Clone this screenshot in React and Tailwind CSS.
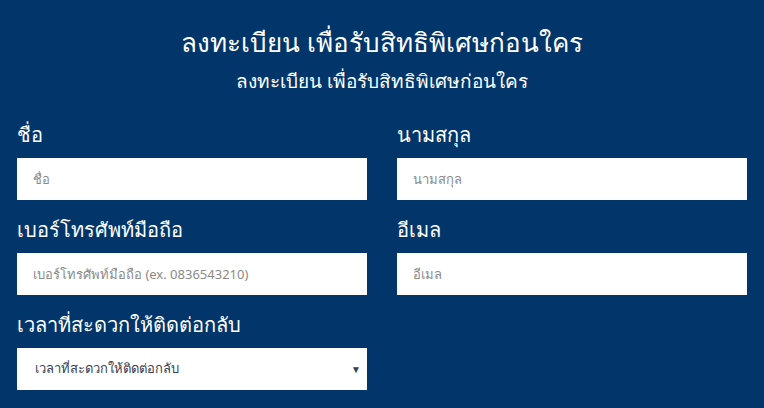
import { useState } from 'react'

function Field({ label, placeholder }) {
  const [value, setValue] = useState('')
  return (
    <div>
      <label className="block text-[20px] leading-[30px] text-white">{label}</label>
      <input
        value={value}
        onChange={(e) => setValue(e.target.value)}
        placeholder={placeholder}
        className="mt-[8px] block h-[42px] w-full bg-white px-4 text-[13px] text-gray-700 outline-none placeholder:text-[#8a8a8a]"
      />
    </div>
  )
}

export default function App() {
  const [time, setTime] = useState('')
  return (
    <div className="h-[408px] w-[764px] overflow-hidden bg-[#02366a] px-[17px] pt-[22px] font-['Noto_Sans',sans-serif]">
      <h1 className="text-center text-[26px] leading-[40px] text-white">ลงทะเบียน เพื่อรับสิทธิพิเศษก่อนใคร</h1>
      <p className="mt-[4px] text-center text-[19px] leading-[30px] text-white">ลงทะเบียน เพื่อรับสิทธิพิเศษก่อนใคร</p>

      <div className="mt-[24px] grid grid-cols-2 gap-x-[30px] gap-y-[15px]">
        <Field label="ชื่อ" placeholder="ชื่อ" />
        <Field label="นามสกุล" placeholder="นามสกุล" />
        <Field label="เบอร์โทรศัพท์มือถือ" placeholder="เบอร์โทรศัพท์มือถือ (ex. 0836543210)" />
        <Field label="อีเมล" placeholder="อีเมล" />
        <div>
          <label className="block text-[20px] leading-[30px] text-white">เวลาที่สะดวกให้ติดต่อกลับ</label>
          <div className="relative mt-[8px]">
            <select
              value={time}
              onChange={(e) => setTime(e.target.value)}
              className="block h-[42px] w-full appearance-none bg-white pl-[18px] pr-8 text-[13px] text-gray-700 outline-none"
            >
              <option value="">เวลาที่สะดวกให้ติดต่อกลับ</option>
              <option value="morning">ช่วงเช้า</option>
              <option value="afternoon">ช่วงบ่าย</option>
            </select>
            <span className="pointer-events-none absolute right-[6px] top-1/2 -translate-y-1/2 text-[10px] text-gray-700">▼</span>
          </div>
        </div>
      </div>
    </div>
  )
}
